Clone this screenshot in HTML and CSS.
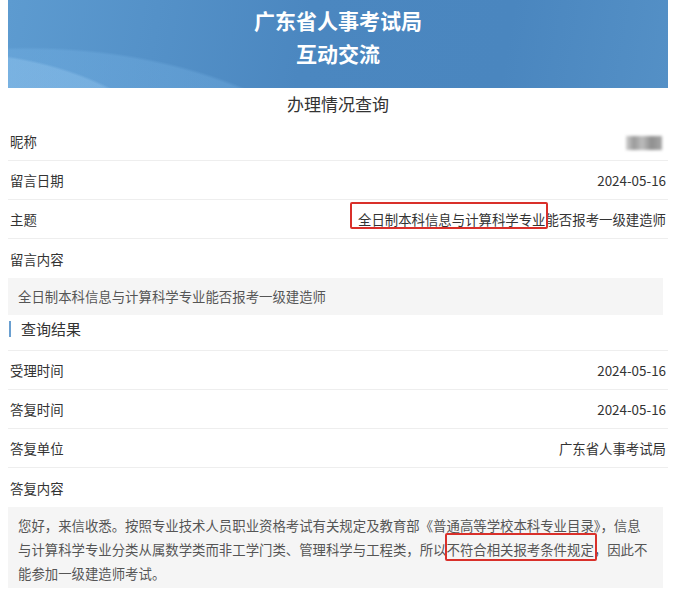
FILE: index.html
```html
<!DOCTYPE html>
<html lang="zh-CN">
<head>
    <meta charset="UTF-8">
    <meta name="viewport" content="width=device-width, initial-scale=1.0">
    <title>互动交流 - 办理情况查询</title>
    <link rel="stylesheet" href="styles.css">
</head>
<body>

    <div class="page">
        <div class="banner">
            <div class="banner-title">广东省人事考试局</div>
            <div class="banner-title">互动交流</div>
        </div>

        <h1 class="page-title">办理情况查询</h1>

        <div class="row">
            <span class="label">昵称</span>
            <span class="value"><span class="blurred"></span></span>
        </div>
        <div class="row">
            <span class="label">留言日期</span>
            <span class="value">2024-05-16</span>
        </div>
        <div class="row">
            <span class="label">主题</span>
            <span class="value subject">全日制本科信息与计算科学专业能否报考一级建造师<span class="mark subject-mark"></span></span>
        </div>
        <div class="row no-line">
            <span class="label">留言内容</span>
        </div>
        <div class="content-box short">全日制本科信息与计算科学专业能否报考一级建造师</div>

        <div class="section-head">查询结果</div>

        <div class="row">
            <span class="label">受理时间</span>
            <span class="value">2024-05-16</span>
        </div>
        <div class="row">
            <span class="label">答复时间</span>
            <span class="value">2024-05-16</span>
        </div>
        <div class="row">
            <span class="label">答复单位</span>
            <span class="value">广东省人事考试局</span>
        </div>
        <div class="row no-line">
            <span class="label">答复内容</span>
        </div>
        <div class="content-box reply">您好，来信收悉。按照专业技术人员职业资格考试有关规定及教育部《普通高等学校本科专业目录》，信息与计算科学专业分类从属数学类而非工学门类、管理科学与工程类，所以<span class="phrase">不符合相关报考条件规定</span>，因此不能参加一级建造师考试。</div>
    </div>

</body>
</html>
```

FILE: styles.css
```css
body {
    margin: 0;
    font-family: "Noto Sans CJK SC", "Liberation Sans", sans-serif;
    color: #333;
    background: #fff;
}
.page {
    width: 660px;
    margin-left: 8px;
}
.banner {
    height: 88px;
    padding-top: 4px;
    box-sizing: border-box;
    background:
        radial-gradient(ellipse 420px 260px at -60px 210px, rgba(150, 200, 240, 0.4) 60%, rgba(150, 200, 240, 0) 61%),
        radial-gradient(ellipse 520px 300px at 20px 260px, rgba(120, 180, 230, 0.35) 70%, rgba(120, 180, 230, 0) 71%),
        linear-gradient(100deg, #5d9bd0 0%, #4b87c0 45%, #4a86bf 75%, #5490c6 100%);
    text-align: center;
}
.banner-title {
    color: #fff;
    font-size: 21px;
    font-weight: bold;
    line-height: 33px;
}
.page-title {
    margin: 0;
    height: 34px;
    line-height: 32px;
    font-size: 17px;
    font-weight: normal;
    text-align: center;
}
.row {
    display: flex;
    justify-content: space-between;
    align-items: center;
    height: 39px;
    padding: 0 2px;
    border-bottom: 1px solid #eee;
    box-sizing: border-box;
    font-size: 13.4px;
}
.row.no-line {
    border-bottom: none;
}
.value {
    position: relative;
}
.blurred {
    display: inline-block;
    width: 36px;
    height: 14px;
    margin-right: 4px;
    vertical-align: middle;
    background: linear-gradient(90deg, #cfcfcf 0%, #9a9a9a 22%, #bdbdbd 45%, #8f8f8f 70%, #a6a6a6 100%);
    filter: blur(1.5px);
}
.mark {
    position: absolute;
    border: 2px solid #d9302a;
    border-radius: 2px;
    box-sizing: border-box;
}
.subject-mark {
    left: -8px;
    top: -7px;
    width: 198px;
    height: 27px;
}
.content-box {
    margin-right: 5px;
    background: #f5f5f5;
    color: #555;
    padding: 0 10px;
}
.content-box.short {
    font-size: 13.4px;
    line-height: 37px;
}
.content-box.reply {
    font-size: 13.4px;
    line-height: 24px;
    padding: 6px 10px 3px;
}
.phrase {
    position: relative;
}
.phrase::after {
    content: "";
    position: absolute;
    left: -2px;
    right: -3px;
    top: -6px;
    bottom: -2px;
    border: 2px solid #d9302a;
    border-radius: 2px;
}
.section-head {
    height: 36px;
    line-height: 28px;
    padding-left: 13px;
    position: relative;
    font-size: 15px;
    border-bottom: 1px solid #eee;
    box-sizing: border-box;
}
.section-head::before {
    content: "";
    position: absolute;
    left: 1px;
    top: 6px;
    width: 2px;
    height: 16px;
    background: #6a9fd0;
}
```
